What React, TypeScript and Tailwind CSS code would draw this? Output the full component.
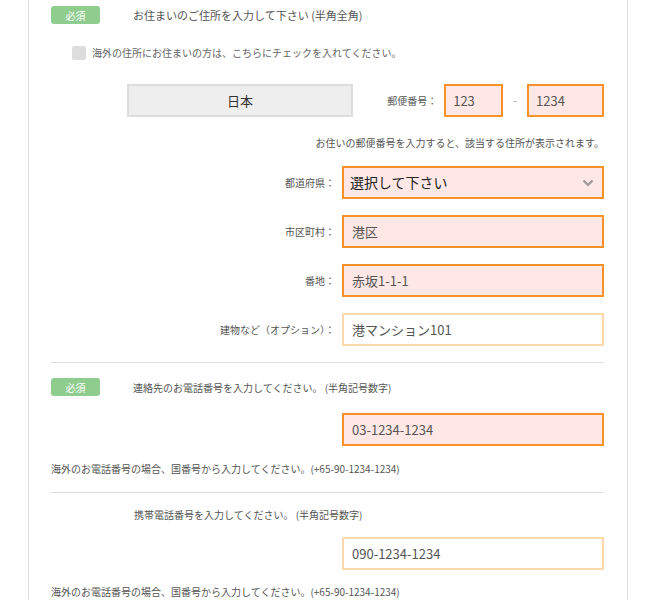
const font = { fontFamily: '"Noto Sans CJK JP", "Noto Sans", sans-serif' };

function Badge() {
  return (
    <span className="flex h-[18px] w-[49px] shrink-0 items-center justify-center rounded-[3px] bg-[#8fcd8f] text-[10px] text-white">
      必須
    </span>
  );
}

function Field({ label, value, strong = true }: { label: string; value: string; strong?: boolean }) {
  return (
    <div className="flex items-center justify-end">
      <span className="mr-[7px] text-[10px] text-[#555]">{label}</span>
      <div
        className={
          "flex h-[33px] w-[262px] items-center px-[8px] text-[13px] text-[#555] " +
          (strong ? "border-2 border-[#f7922b] bg-[#fee7e5]" : "border-2 border-[#fdd9ab] bg-white")
        }
      >
        {value}
      </div>
    </div>
  );
}

export default function App() {
  return (
    <div style={font} className="ml-[28px] mr-[32px] min-h-[600px] border-x border-[#ddd] bg-white pl-[22px] pr-[23px]">
      <div className="flex items-center gap-[33px] pt-[6px]">
        <Badge />
        <span className="text-[11px] text-[#555]">お住まいのご住所を入力して下さい (半角全角)</span>
      </div>

      <div className="ml-[21px] mt-[21px] flex items-center gap-[6px]">
        <span className="h-[14px] w-[14px] rounded-[2px] bg-[#ddd]" />
        <span className="text-[10px] text-[#666]">海外の住所にお住まいの方は、こちらにチェックを入れてください。</span>
      </div>

      <div className="mt-[24px] flex items-center">
        <div className="ml-[76px] flex h-[33px] w-[226px] items-center justify-center border-2 border-[#ddd] bg-[#eee] text-[13px] text-[#333]">
          日本
        </div>
        <span className="ml-auto mr-[7px] text-[10px] text-[#555]">郵便番号：</span>
        <div className="flex h-[33px] w-[59px] items-center border-2 border-[#f7922b] bg-[#fee7e5] px-[7px] text-[13px] text-[#555]">123</div>
        <span className="mx-[10px] text-[11px] text-[#999]">-</span>
        <div className="flex h-[33px] w-[77px] items-center border-2 border-[#f7922b] bg-[#fee7e5] px-[7px] text-[13px] text-[#555]">1234</div>
      </div>

      <p className="mt-[18px] text-right text-[10px] text-[#555]">お住いの郵便番号を入力すると、該当する住所が表示されます。</p>

      <div className="mt-[16px] flex flex-col gap-[16px]">
        <div className="flex items-center justify-end">
          <span className="mr-[7px] text-[10px] text-[#555]">都道府県：</span>
          <div className="flex h-[33px] w-[262px] items-center justify-between border-2 border-[#f7922b] bg-[#fee7e5] px-[6px] text-[14px] text-[#222]">
            選択して下さい
            <svg width="12" height="8" viewBox="0 0 12 8" className="mr-[2px]">
              <path d="M1.5 1.5 L6 6 L10.5 1.5" stroke="#999" strokeWidth="2.2" fill="none" />
            </svg>
          </div>
        </div>
        <Field label="市区町村：" value="港区" />
        <Field label="番地：" value="赤坂1-1-1" />
        <Field label="建物など（オプション）：" value="港マンション101" strong={false} />
      </div>

      <hr className="mt-[16px] border-[#ddd]" />

      <div className="mt-[15px] flex items-center gap-[33px]">
        <Badge />
        <span className="text-[10px] text-[#555]">連絡先のお電話番号を入力してください。 (半角記号数字)</span>
      </div>
      <div className="mt-[17px] flex justify-end">
        <div className="flex h-[33px] w-[262px] items-center border-2 border-[#f7922b] bg-[#fee7e5] px-[8px] text-[13px] text-[#555]">03-1234-1234</div>
      </div>
      <p className="mt-[15px] text-[10px] text-[#555]">海外のお電話番号の場合、国番号から入力してください。(+65-90-1234-1234)</p>

      <hr className="mt-[16px] border-[#ddd]" />

      <p className="ml-[83px] mt-[14px] text-[10px] text-[#555]">携帯電話番号を入力してください。 (半角記号数字)</p>
      <div className="mt-[15px] flex justify-end">
        <div className="flex h-[33px] w-[262px] items-center border-2 border-[#fdd9ab] bg-white px-[8px] text-[13px] text-[#555]">090-1234-1234</div>
      </div>
      <p className="mt-[14px] text-[10px] text-[#555]">海外のお電話番号の場合、国番号から入力してください。(+65-90-1234-1234)</p>
    </div>
  );
}
